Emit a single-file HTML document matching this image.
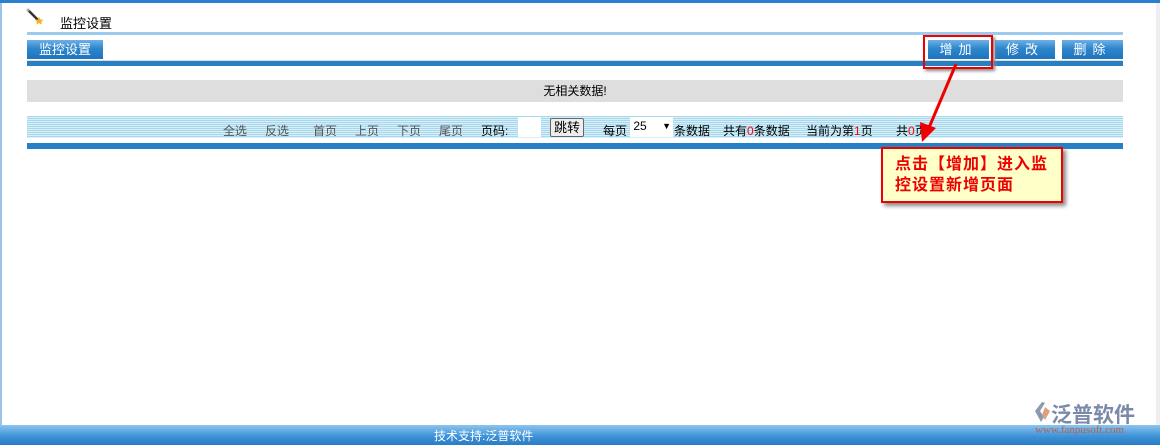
<!DOCTYPE html>
<html><head><meta charset="utf-8"><style>
body{margin:0;width:1160px;height:445px;position:relative;overflow:hidden;background:#fff;font-family:"Liberation Sans","Noto Sans CJK SC",sans-serif;font-size:12px;}
.a{position:absolute}
.btn{position:absolute;top:40px;height:19px;background:linear-gradient(#6fb0e6,#2d86cc 45%,#1f74bd);color:#fff;font-size:13px;text-align:center;line-height:19px;letter-spacing:6px}
.pg{position:absolute;top:122px;font-size:12px;color:#555}
.k{color:#000}
</style></head><body>
<div class="a" style="left:0;top:0;width:1160px;height:3px;background:#2a7fd0"></div>
<div class="a" style="left:0;top:3px;width:2px;height:422px;background:#9cc4e8"></div>
<div class="a" style="left:1156px;top:3px;width:4px;height:422px;background:#eee"></div>
<svg class="a" style="left:26px;top:8px" width="20" height="18"><line x1="2" y1="2" x2="12" y2="12" stroke="#333" stroke-width="2.5"/><circle cx="2" cy="2" r="1.5" fill="#aaa"/><path d="M13 9l1.5 2.5 3 .3-2.2 1.8.7 3-3-1.6-2.7 1.6.6-3L9 11.8l3-.3z" fill="#f5b020"/></svg>
<div class="a" style="left:60px;top:13px;font-size:13px">监控设置</div>
<div class="a" style="left:27px;top:32px;width:1096px;height:3px;background:#9ccaee"></div>
<div class="btn" style="left:27px;width:76px;letter-spacing:0">监控设置</div>
<div class="btn" style="left:928px;width:61px">增加</div>
<div class="btn" style="left:995px;width:60px">修改</div>
<div class="btn" style="left:1062px;width:61px">删除</div>
<div class="a" style="left:27px;top:60px;width:1096px;height:1px;background:#ddd"></div>
<div class="a" style="left:27px;top:61px;width:1096px;height:5px;background:#2780c4"></div>
<div class="a" style="left:27px;top:80px;width:1096px;height:22px;background:#dedede;text-align:center;line-height:22px">无相关数据!</div>
<div class="a" style="left:27px;top:116px;width:1096px;height:22px;background:repeating-linear-gradient(#a8d8ec 0 1px,#d8eef8 1px 2px)"></div>
<div class="pg" style="left:223px">全选</div>
<div class="pg" style="left:265px">反选</div>
<div class="pg" style="left:313px">首页</div>
<div class="pg" style="left:355px">上页</div>
<div class="pg" style="left:397px">下页</div>
<div class="pg" style="left:439px">尾页</div>
<div class="pg k" style="left:481px">页码:</div>
<div class="a" style="left:518px;top:117px;width:23px;height:20px;background:#fff"></div>
<div class="a" style="left:550px;top:118px;width:32px;height:17px;border:1px solid #666;border-radius:2px;background:#eee;font-size:13px;line-height:17px;text-align:center">跳转</div>
<div class="pg k" style="left:603px">每页</div>
<div class="a" style="left:630px;top:117px;width:43px;height:20px;background:#fff;font-size:12px;line-height:18px">&nbsp;25<span style="position:absolute;right:2px;font-size:9px">▼</span></div>
<div class="pg k" style="left:674px">条数据</div>
<div class="pg k" style="left:723px">共有<span style="color:red">0</span>条数据</div>
<div class="pg k" style="left:806px">当前为第<span style="color:red">1</span>页</div>
<div class="pg k" style="left:896px">共<span style="color:red">0</span>页</div>
<div class="a" style="left:27px;top:143px;width:1096px;height:6px;background:#2780c4"></div>
<div class="a" style="left:923px;top:35px;width:66px;height:30px;border:2px solid #e00;box-shadow:2px 2px 3px #888"></div>
<svg class="a" style="left:900px;top:60px" width="80" height="90"><line x1="56" y1="4" x2="28" y2="70" stroke="#e00" stroke-width="3"/><path d="M22 82l-2-20 16 6z" fill="#e00"/></svg>
<div class="a" style="left:881px;top:147px;width:182px;height:56px;background:#ffffc8;border:2px solid #e00;box-shadow:3px 3px 4px #888;color:#e00;font-weight:bold;font-size:16px;line-height:21px;padding:5px 0 0 12px;box-sizing:border-box;white-space:nowrap;letter-spacing:1px">点击【增加】进入监<br>控设置新增页面</div>
<div class="a" style="left:0;top:425px;width:1160px;height:20px;background:linear-gradient(#8cc4ee,#3a90d6 60%,#2a7cc4);"></div>
<div class="a" style="left:434px;top:427px;color:#fff;font-size:12px">技术支持:泛普软件</div>
<svg class="a" style="left:1033px;top:401px" width="18" height="22"><path d="M9 1L2 10l6 11 3-5-4-6 5-8z" fill="#8a9ab0"/><path d="M12 6l5 4-5 9-3-5z" fill="#e0a080"/></svg>
<div class="a" style="left:1051px;top:399px;color:#7a8aa8;font-size:21px;font-weight:bold">泛普软件</div>
<div class="a" style="left:1035px;top:424px;color:#b06050;font-size:11px;font-family:'Liberation Serif',serif">www.fanpusoft.com</div>
</body></html>
